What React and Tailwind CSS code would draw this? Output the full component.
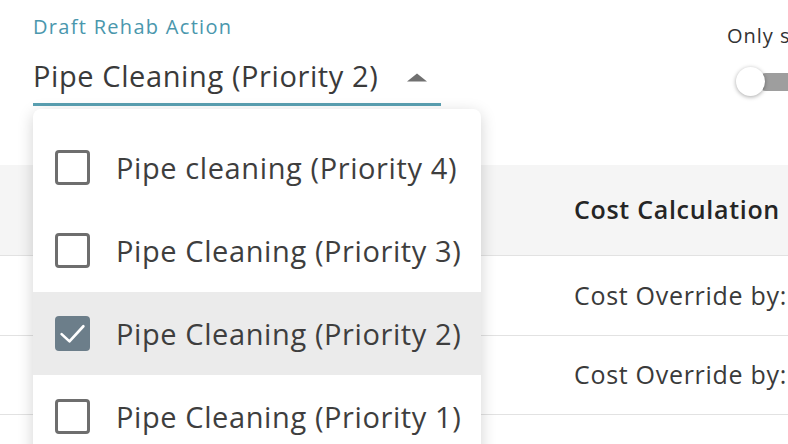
import React from "react";

const items = [
  { label: "Pipe cleaning (Priority 4)", checked: false },
  { label: "Pipe Cleaning (Priority 3)", checked: false },
  { label: "Pipe Cleaning (Priority 2)", checked: true },
  { label: "Pipe Cleaning (Priority 1)", checked: false },
];

function Checkbox({ checked }) {
  if (checked) {
    return (
      <div className="w-[35px] h-[35px] rounded-[4px] bg-[#6c7e8a] flex items-center justify-center shrink-0">
        <svg width="29" height="29" viewBox="0 0 24 24" fill="none">
          <path d="M3 12.5 L9.5 18.5 L21 6" stroke="white" strokeWidth="2.2" strokeLinecap="round" strokeLinejoin="round" />
        </svg>
      </div>
    );
  }
  return <div className="w-[35px] h-[35px] rounded-[4px] border-[3px] border-[#6e6e6e] shrink-0" />;
}

export default function App() {
  return (
    <div
      className="relative w-[788px] h-[444px] overflow-hidden bg-white text-[#333]"
      style={{ fontFamily: '"Open Sans", "Noto Sans", sans-serif' }}
    >
      {/* top form row */}
      <div className="flex justify-between h-[165px]">
        <div className="pl-[33px] pt-[12px]">
          <div className="text-[20px] leading-[30px] tracking-[1.3px] text-[#4a97ad]">Draft Rehab Action</div>
          <div className="w-[408px] h-[64px] flex items-center justify-between border-b-[3px] border-[#5aa0b2]">
            <span className="text-[29px] tracking-[0.6px] text-[#3a3a3a] pt-[6px]">Pipe Cleaning (Priority 2)</span>
            <svg width="22" height="9" viewBox="0 0 22 9" className="mr-[13px] mt-[10px]">
              <path d="M1 8.5 L11 0.5 L21 8.5 Z" fill="#707070" />
            </svg>
          </div>
        </div>
        <div className="w-[61px] pt-[21px] whitespace-nowrap">
          <div className="text-[20px] leading-[30px] tracking-[1px] text-[#333]">Only show selected</div>
          <div className="relative mt-[15px] h-[30px]">
            <div className="absolute left-[30px] top-[7px] w-[50px] h-[18px] rounded-full bg-[#9e9e9e]" />
            <div className="absolute left-[9px] top-[1px] w-[29px] h-[29px] rounded-full bg-white shadow-[0_1px_4px_rgba(0,0,0,0.35)]" />
          </div>
        </div>
      </div>

      {/* table */}
      <div className="text-[25px] tracking-[0.7px]">
        <div className="grid grid-cols-[574px_1fr] h-[91px] bg-[#f5f5f5] border-b border-[#e2e2e2] items-center">
          <div />
          <div className="font-semibold text-[#252525] whitespace-nowrap">Cost Calculation</div>
        </div>
        <div className="grid grid-cols-[574px_1fr] h-[80px] border-b border-[#e2e2e2] items-center">
          <div />
          <div className="whitespace-nowrap text-[#3a3a3a]">Cost Override by:</div>
        </div>
        <div className="grid grid-cols-[574px_1fr] h-[79px] border-b border-[#e2e2e2] items-center">
          <div />
          <div className="whitespace-nowrap text-[#3a3a3a]">Cost Override by:</div>
        </div>
        <div className="h-[80px]" />
      </div>

      {/* dropdown menu */}
      <div className="absolute left-[33px] top-[109px] w-[448px] h-[360px] bg-white rounded-[8px] shadow-[0_4px_16px_rgba(0,0,0,0.18)] pt-[17px]">
        {items.map((it) => (
          <div
            key={it.label}
            className={`h-[83px] flex items-center gap-[26px] pl-[22px] ${it.checked ? "bg-[#ebebeb]" : ""}`}
          >
            <Checkbox checked={it.checked} />
            <span className="text-[29px] tracking-[0.6px] text-[#3e3e3e] whitespace-nowrap">{it.label}</span>
          </div>
        ))}
      </div>
    </div>
  );
}
